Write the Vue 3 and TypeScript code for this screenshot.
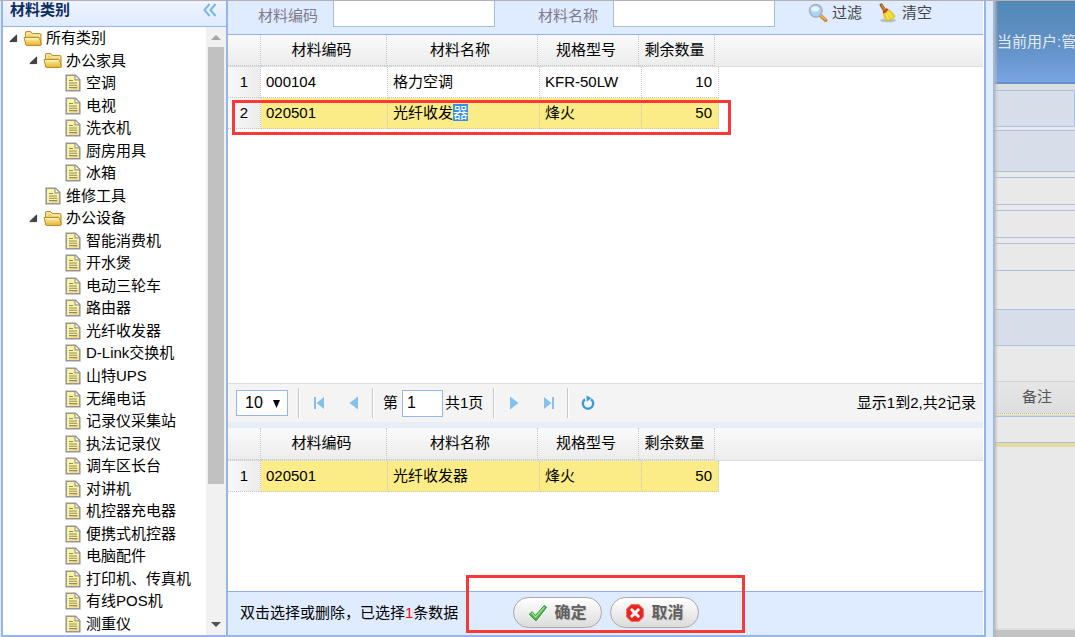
<script setup lang="ts">
import { ref } from 'vue'

interface TreeNode {
  label: string
  level: number
  folder?: boolean
}

interface Material {
  code: string
  name: string
  model: string
  qty: number
  marked?: boolean
}

const leaf = (label: string, level = 2): TreeNode => ({ label, level })
const folder = (label: string, level: number): TreeNode => ({ label, level, folder: true })

const nodes: TreeNode[] = [
  folder('所有类别', 0),
  folder('办公家具', 1),
  ...['空调', '电视', '洗衣机', '厨房用具', '冰箱'].map((n) => leaf(n)),
  leaf('维修工具', 1),
  folder('办公设备', 1),
  ...[
    '智能消费机', '开水煲', '电动三轮车', '路由器', '光纤收发器', 'D-Link交换机',
    '山特UPS', '无绳电话', '记录仪采集站', '执法记录仪', '调车区长台', '对讲机',
    '机控器充电器', '便携式机控器', '电脑配件', '打印机、传真机', '有线POS机', '测重仪',
  ].map((n) => leaf(n)),
]

const columns = ['材料编码', '材料名称', '规格型号', '剩余数量']
const stock: Material[] = [
  { code: '000104', name: '格力空调', model: 'KFR-50LW', qty: 10 },
  { code: '020501', name: '光纤收发器', model: '烽火', qty: 50, marked: true },
]
const chosen: Material[] = [{ code: '020501', name: '光纤收发器', model: '烽火', qty: 50, marked: true }]

const filterCode = ref('')
const filterName = ref('')
const pageSize = ref('10')
const page = ref('1')

function clearFilters() {
  filterCode.value = ''
  filterName.value = ''
}
</script>

<template>
  <div class="screen">
    <div class="dialog">
      <aside class="sidebar">
        <header class="side-head">
          <h2>材料类别</h2>
          <button class="collapse" type="button" aria-label="收起">
            <svg width="14" height="14" viewBox="0 0 14 14" fill="none" stroke="#7db5ea" stroke-width="2">
              <path d="M6.5 1 1.5 7l5 6M12.5 1l-5 6 5 6" />
            </svg>
          </button>
        </header>
        <div class="side-body">
          <ul class="tree">
            <li v-for="node in nodes" :key="node.label" :class="'level-' + node.level">
              <span class="toggle">
                <svg v-if="node.folder" width="9" height="9" viewBox="0 0 9 9">
                  <path d="M7.6 1v6.6H.8z" fill="#444" stroke="#222" stroke-width=".8" stroke-linejoin="round" />
                </svg>
              </span>
              <span class="icon">
                <svg v-if="node.folder" width="20" height="17" viewBox="0 0 20 17">
                  <defs>
                    <linearGradient id="folderFront" x1="0" y1="0" x2="0" y2="1">
                      <stop offset="0" stop-color="#fff3a0" />
                      <stop offset="1" stop-color="#e6b232" />
                    </linearGradient>
                  </defs>
                  <path d="M2.5 14.8V2.8q0-1.3 1.2-1.3h4l1.6 2h7.5q1.2 0 1.2 1.2v10z" fill="#f0cf6c" stroke="#b98f35" />
                  <path d="M4 6V3h3.3l1.4 2h7.8v2" fill="none" stroke="#fff4c6" />
                  <path d="M1 7.5h14.3q1 0 1.3 1l1.7 5.6q.3 1.4-1 1.4H4.2q-1.1 0-1.4-1z" fill="url(#folderFront)" stroke="#bf8a28" />
                  <path d="M2.4 8.7h12.4" stroke="#fffbd8" />
                </svg>
                <svg v-else width="16" height="18" viewBox="0 0 16 18">
                  <path d="M1.2 1.2h9.3l4.3 4.3v11.3H1.2z" fill="#fbf4a3" stroke="#969696" stroke-width="1.5" />
                  <path d="M10 1.8v4.1h4.2" fill="#fffce5" stroke="#969696" stroke-width="1.2" />
                  <path d="M2.5 15.7h11V9q-1 5-7 6z" fill="#f6d48e" />
                  <path d="M4 6.5h4M4 9h8M4 11.3h8M4 13.6h8" stroke="#8e8b62" stroke-width="1.1" />
                </svg>
              </span>
              <span class="label">{{ node.label }}</span>
            </li>
          </ul>
          <div class="scrollbar" aria-hidden="true">
            <svg width="20" height="20" viewBox="0 0 20 20"><path d="M10 8l5 5H5z" fill="#a3a3a3" /></svg>
            <div class="track"><div class="thumb"></div></div>
            <svg width="20" height="20" viewBox="0 0 20 20"><path d="M5 7h10l-5 5z" fill="#505050" /></svg>
          </div>
        </div>
      </aside>

      <main class="main">
        <form class="filters" @submit.prevent>
          <label for="code">材料编码</label>
          <input id="code" v-model="filterCode" type="text" />
          <label for="name">材料名称</label>
          <input id="name" v-model="filterName" type="text" />
          <button class="tool" type="submit">
            <svg width="20" height="20" viewBox="0 0 20 20">
              <path d="M12 12l5.6 5.2" stroke="#cf7d25" stroke-width="3.6" stroke-linecap="round" />
              <path d="M13 12.7l4.2 3.8" stroke="#f6b75b" stroke-width="1.6" stroke-linecap="round" />
              <circle cx="7.8" cy="7.8" r="6.2" fill="#a6d6fb" stroke="#a9b4c8" stroke-width="1.8" />
              <ellipse cx="7" cy="6" rx="4" ry="2.8" fill="#e4f5ff" />
            </svg>
            过滤
          </button>
          <button class="tool" type="button" @click="clearFilters">
            <svg width="20" height="20" viewBox="0 0 20 20">
              <ellipse cx="10" cy="17.3" rx="8" ry="2" fill="#b5bfce" />
              <path d="M3.2 2l4 6" stroke="#9b6422" stroke-width="3.2" stroke-linecap="round" />
              <path d="M3.6 2l3.6 5.5" stroke="#d39a47" stroke-width="1.1" />
              <path d="M5.5 10q3-1 4-4 4 1.5 7.6 7.2-2.4 4.2-9.1 4.5Q5.5 14 5.5 10z" fill="#ead52f" stroke="#d0b422" stroke-width=".7" />
              <path d="M8.5 10.5l2 6M10.5 9.5l3.5 5.5" stroke="#fbf070" />
              <path d="M5 9.6q2.8-.9 4.4-3.8" fill="none" stroke="#cf3a22" stroke-width="2.2" />
            </svg>
            清空
          </button>
        </form>

        <section class="grid-area stock">
          <table>
            <thead>
              <tr><td></td><th v-for="c in columns" :key="c" scope="col">{{ c }}</th></tr>
            </thead>
            <tbody>
              <tr v-for="(row, i) in stock" :key="row.code" :class="{ marked: row.marked }">
                <th scope="row">{{ i + 1 }}</th>
                <td>{{ row.code }}</td>
                <td v-if="row.marked">光纤收发<mark>器</mark></td>
                <td v-else>{{ row.name }}</td>
                <td>{{ row.model }}</td>
                <td class="num">{{ row.qty }}</td>
              </tr>
            </tbody>
          </table>
          <div class="callout row-callout"></div>
        </section>

        <nav class="pager" aria-label="分页">
          <span class="size">
            <select v-model="pageSize" aria-label="每页记录数">
              <option>10</option>
              <option>20</option>
              <option>50</option>
            </select>
            <svg width="9" height="9" viewBox="0 0 9 9"><path d="M1 1h7L4.5 9z" /></svg>
          </span>
          <i class="sep"></i>
          <button type="button" aria-label="首页">
            <svg width="12" height="14" viewBox="0 0 12 14" fill="#84c1ee"><path d="M1 1h2v12H1zM11 1v12L3.5 7z" /></svg>
          </button>
          <button type="button" aria-label="上一页">
            <svg width="10" height="14" viewBox="0 0 10 14" fill="#84c1ee"><path d="M9 .5v13L.5 7z" /></svg>
          </button>
          <i class="sep"></i>
          <span class="goto">
            <label for="page">第</label>
            <input id="page" v-model="page" type="text" />
            <span>共1页</span>
          </span>
          <i class="sep"></i>
          <button type="button" aria-label="下一页">
            <svg width="10" height="14" viewBox="0 0 10 14" fill="#84c1ee"><path d="M1 .5v13L9.5 7z" /></svg>
          </button>
          <button type="button" aria-label="末页">
            <svg width="12" height="14" viewBox="0 0 12 14" fill="#84c1ee"><path d="M9 1h2v12H9zM1 1v12L8.5 7z" /></svg>
          </button>
          <i class="sep"></i>
          <button type="button" aria-label="刷新">
            <svg width="14" height="16" viewBox="0 0 14 16">
              <path d="M10 4.3A5.2 5.2 0 1 1 4 4.3" fill="none" stroke="#3d9ad9" stroke-width="2.4" />
              <path d="M5.4 .4l5 2.6-4.6 3.8z" fill="#3d9ad9" />
            </svg>
          </button>
          <span class="summary">显示1到2,共2记录</span>
        </nav>

        <section class="grid-area chosen">
          <table>
            <thead>
              <tr><td></td><th v-for="c in columns" :key="c" scope="col">{{ c }}</th></tr>
            </thead>
            <tbody>
              <tr v-for="(row, i) in chosen" :key="row.code" class="marked">
                <th scope="row">{{ i + 1 }}</th>
                <td>{{ row.code }}</td>
                <td>{{ row.name }}</td>
                <td>{{ row.model }}</td>
                <td class="num">{{ row.qty }}</td>
              </tr>
            </tbody>
          </table>
        </section>

        <footer class="foot">
          <p>双击选择或删除，已选择<em>{{ chosen.length }}</em>条数据</p>
          <button type="button">
            <svg width="20" height="18" viewBox="0 0 20 18">
              <path d="M1.3 10.2l3-2.4 3.2 3.7L16.2 1.6l2.4 1.6L8 16.8z" fill="#4fb94d" stroke="#2d8d36" stroke-linejoin="round" />
              <path d="M3.2 9.8l1-.7 3.3 4L16.4 3" fill="none" stroke="#a2e398" stroke-width="1.2" />
            </svg>
            确定
          </button>
          <button type="button">
            <svg width="20" height="18" viewBox="0 0 20 18">
              <path d="M6 .7h8l4.3 4.2v8.2L14 17.3H6l-4.3-4.2V4.9z" fill="#e8251f" stroke="#f35b54" />
              <path d="M6.8 5.8l6.4 6.4M13.2 5.8l-6.4 6.4" stroke="#fff" stroke-width="3" stroke-linecap="round" />
            </svg>
            取消
          </button>
          <div class="callout foot-callout"></div>
        </footer>
      </main>
    </div>

    <div class="backdrop">
      <div class="banner">当前用户:管</div>
      <div class="band spacer"></div>
      <div class="band panel boxed"></div>
      <div class="band panel tall"></div>
      <div class="band field"></div>
      <div class="band field"></div>
      <div class="band field"></div>
      <div class="band plain"></div>
      <div class="band panel strip"></div>
      <div class="band blank"></div>
      <div class="remark">备注</div>
      <div class="band editor"></div>
      <div class="band rest"></div>
      <div class="band floor"></div>
    </div>
  </div>
</template>

<style>
body {
  margin: 0;
}
</style>

<style scoped>
.screen {
  display: flex;
  box-sizing: border-box;
  height: 100vh;
  min-height: 600px;
  overflow: hidden;
  border-top: 1px solid #b5b0b6;
  font: 15px/20px "Liberation Sans", "Noto Sans CJK SC", sans-serif;
  color: #000;
}
.screen * {
  box-sizing: border-box;
}
button,
input,
select {
  margin: 0;
  padding: 0;
  font: inherit;
  color: inherit;
  border-radius: 0;
}
button {
  border: 0;
  background: none;
}
svg {
  display: block;
  flex: none;
}

.dialog {
  display: flex;
  flex: 1;
  min-width: 0;
  padding: 0 7px 0 1px;
  background: #dfebff;
  border-right: 1px solid #99b8e8;
}
.sidebar {
  display: flex;
  flex-direction: column;
  flex: none;
  width: 227px;
  background: #fff;
  border: solid #95b6e6;
  border-width: 0 2px 2px;
}
.side-head {
  display: flex;
  align-items: flex-start;
  justify-content: space-between;
  flex: none;
  height: 26px;
  padding: 0 9px 0 7px;
  background: linear-gradient(#eef4ff, #dfebff);
  border-bottom: 1px solid #95b6e6;
}
.side-head h2 {
  margin: 0;
  font-size: 15px;
  line-height: 17px;
  color: #0e2d5f;
}
.collapse {
  padding-top: 2px;
}
.side-body {
  display: flex;
  flex: 1;
  min-height: 0;
}
.tree {
  display: flex;
  flex-direction: column;
  flex: 1;
  margin: 0;
  padding: 0;
  list-style: none;
}
.tree li {
  display: flex;
  align-items: center;
  flex: 1 1 22px;
  min-height: 0;
  max-height: 23px;
  white-space: nowrap;
}
.level-1 {
  padding-left: 20px;
}
.tree .level-2 {
  padding-left: 40px;
}
.toggle,
.icon {
  display: flex;
  justify-content: center;
  flex: none;
  width: 20px;
}
.tree .label {
  padding-left: 3px;
}
.scrollbar {
  display: flex;
  flex-direction: column;
  width: 20px;
  background: #f1f1f1;
}
.track {
  flex: 1;
  padding: 0 2px;
}
.thumb {
  height: 77%;
  background: #c1c1c1;
}

.main {
  display: flex;
  flex-direction: column;
  flex: 1;
  min-width: 0;
  background: #fff;
  border: solid #95b6e6;
  border-width: 0 2px 2px 0;
  padding-right: 1px;
}
.filters {
  display: flex;
  align-items: flex-start;
  flex: none;
  height: 34px;
  padding-left: 30px;
  background: #dfebff;
  border-bottom: 1px solid #8fb3e8;
}
.filters label {
  padding-top: 5px;
  color: #7f7a8c;
}
.filters input {
  width: 162px;
  height: 26px;
  margin: 0 43px 0 15px;
  padding: 0 5px;
  background: #fff;
  border: solid #a4bed8;
  border-width: 0 1px 1px;
}
#name {
  margin-right: 33px;
}
.tool {
  display: flex;
  align-items: center;
  gap: 4px;
  height: 24px;
  margin-right: 16px;
  color: #444;
}

.grid-area {
  position: relative;
}
.stock {
  flex: 1;
  min-height: 0;
}
.chosen {
  flex: none;
  height: 169px;
  border-top: 6px solid #e6eef8;
}
table,
thead,
tbody {
  display: block;
}
thead {
  background: linear-gradient(#fafafa, #ececec);
  border-bottom: 1px solid #ddd;
}
tr {
  display: grid;
  grid-template-columns: 33px 127px 152px 102px 77px;
  height: 31px;
}
thead tr {
  grid-template-columns: 33px 126px 151px 101px 76px;
}
.chosen thead tr {
  height: 32px;
}
th,
td {
  padding: 5px;
  border: dotted #c6c6c6;
  border-width: 0 1px 1px 0;
  font-weight: normal;
  text-align: left;
  white-space: nowrap;
}
thead th {
  padding-right: 9px;
  text-align: center;
}
tbody tr {
  width: max-content;
}
tbody th {
  padding: 5px;
  text-align: center;
  background: linear-gradient(90deg, #f8f8f8, #ececec);
}
.marked td {
  background: #fbec88;
}
td.num {
  padding-right: 6px;
  text-align: right;
}
mark {
  color: #fff;
  background: #338fea;
}
.callout {
  position: absolute;
  border: 3px solid #fb3838;
  pointer-events: none;
}
.row-callout {
  top: 65px;
  left: 4px;
  width: 499px;
  height: 35px;
}
.foot-callout {
  top: -17px;
  left: 238px;
  width: 279px;
  height: 58px;
}

.pager {
  display: flex;
  align-items: center;
  flex: none;
  height: 39px;
  padding: 0 7px 0 8px;
  background: #f4f4f4;
  border-top: 1px solid #ddd;
}
.size {
  position: relative;
  margin-right: 9px;
}
.size select {
  display: block;
  width: 52px;
  height: 26px;
  padding-left: 8px;
  font-size: 16px;
  appearance: none;
  background: #fff;
  border: 1px solid #95b6e6;
}
.size svg {
  position: absolute;
  top: 9px;
  right: 7px;
  pointer-events: none;
}
.sep {
  width: 2px;
  height: 30px;
  margin: 0 1px;
  border-left: 1px solid #c8c8c8;
  border-right: 1px solid #fff;
}
.pager button {
  display: flex;
  align-items: center;
  justify-content: center;
  width: 35px;
  height: 26px;
}
.goto {
  display: flex;
  align-items: center;
  padding: 0 9px 0 8px;
}
.goto input {
  width: 41px;
  height: 27px;
  margin: 0 2px 0 4px;
  padding: 0 4px;
  font-size: 16px;
  background: #fff;
  border: 1px solid #95b6e6;
}
.summary {
  margin-left: auto;
}

.foot {
  position: relative;
  display: flex;
  align-items: center;
  flex: none;
  height: 44px;
  padding: 0 0 2px 12px;
  background: #dfebff;
  border-top: 1px solid #8fb3e8;
}
.foot p {
  width: 273px;
  margin: 0;
}
.foot em {
  font-style: normal;
  color: #f00;
}
.foot button {
  display: flex;
  align-items: center;
  justify-content: center;
  gap: 6px;
  width: 89px;
  height: 31px;
  margin-right: 8px;
  font-size: 16px;
  font-weight: bold;
  color: #606060;
  text-shadow: 1px 1px 1px #ccc;
  background: linear-gradient(#fff, #dcdcdc);
  border: 1px solid #a9a9a9;
  border-radius: 16px;
}

.backdrop {
  position: relative;
  display: flex;
  flex-direction: column;
  flex: none;
  width: 81px;
  overflow: hidden;
  background: #e9e9e9;
}
.backdrop::after {
  content: "";
  position: absolute;
  inset: 0 auto 0 0;
  width: 4px;
  background: linear-gradient(90deg, #b8b8b8, #b8b8b800);
}
.banner {
  flex: none;
  height: 83px;
  padding: 31px 0 0 3px;
  white-space: nowrap;
  color: #e6eaf0;
  background: linear-gradient(#5288b6, #6393c8 60%, #78a4e4);
  border-bottom: 2px solid #6292c8;
}
.band {
  flex: none;
  border: solid #abc0dc;
  border-width: 0;
}
.spacer {
  height: 6px;
  background: #dcdfe2;
}
.panel {
  background: #d8dee9;
  border-width: 1px 0;
}
.boxed {
  height: 37px;
  margin-bottom: 3px;
  border-right-width: 1px;
}
.tall {
  height: 42px;
  margin-bottom: 5px;
}
.field {
  height: 28px;
  margin-bottom: 5px;
  border-width: 1px 0;
}
.plain {
  height: 33px;
}
.strip {
  height: 37px;
}
.blank {
  height: 35px;
}
.remark {
  flex: none;
  height: 33px;
  padding: 5px 0 0 28px;
  color: #555;
  background: linear-gradient(#e6e6e6, #dedede);
  border-top: 1px solid #d3d3d3;
  border-bottom: 1px dotted #bbb;
}
.editor {
  height: 27px;
  margin-top: 2px;
  border-width: 1px 0;
  box-shadow: 0 -1px #e5dda0;
}
.rest {
  flex: 1;
  border-top: 4px solid #e5dda0;
  border-bottom: 2px solid #e0e0e0;
}
.floor {
  height: 7px;
  background: #c3c3c3;
}
</style>
